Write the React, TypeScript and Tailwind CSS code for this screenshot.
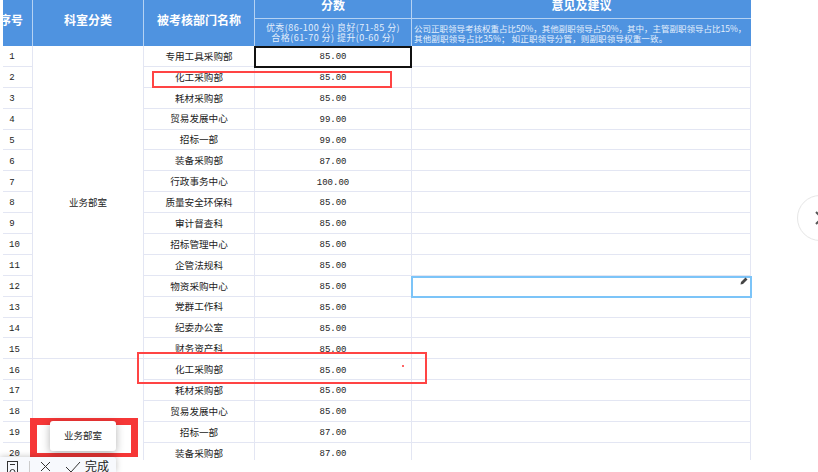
const names = ["专用工具采购部","化工采购部","耗材采购部","贸易发展中心","招标一部","装备采购部","行政事务中心","质量安全环保科","审计督查科","招标管理中心","企管法规科","物资采购中心","党群工作科","纪委办公室","财务资产科","化工采购部","耗材采购部","贸易发展中心","招标一部","装备采购部"];
const scores = ["85.00","85.00","85.00","99.00","99.00","87.00","100.00","85.00","85.00","85.00","85.00","85.00","85.00","85.00","85.00","85.00","85.00","85.00","87.00","87.00"];

export default function App() {
  const head = "flex items-center justify-center bg-[#4f93e0] text-[12px] leading-none font-bold text-white border-[#b5d2f3]";
  const base = "flex items-center justify-center border-r border-b border-[#e3e6f3] bg-white text-[#222] overflow-hidden";
  const mono = "font-['Liberation_Mono',monospace] text-[9px] pt-[4px]";
  return (
    <div className="relative h-[472px] w-[818px] overflow-hidden bg-white font-['Noto_Sans_CJK_SC','Liberation_Sans',sans-serif]">
      <div className="ml-[3px] grid w-[748px] grid-cols-[30px_111px_111px_157px_339px] grid-rows-[19px_27px_repeat(20,20.9px)]">
        <div className={`${head} row-span-2 border-r justify-end overflow-hidden pr-[9px] pb-[7px] whitespace-nowrap`}>序号</div>
        <div className={`${head} row-span-2 border-r pb-[7px]`}>科室分类</div>
        <div className={`${head} row-span-2 border-r pb-[7px]`}>被考核部门名称</div>
        <div className={`${head} border-r border-b pb-[8px]`}>分数</div>
        <div className={`${head} border-b pb-[8px]`}>意见及建议</div>
        <div className="col-start-4 flex flex-col items-center justify-center whitespace-nowrap border-r border-[#b5d2f3] bg-[#4f93e0] text-[9px] leading-[10px] tracking-[0.45px] text-[#e4effc]">
          <span>优秀(86-100 分) 良好(71-85 分)</span>
          <span>合格(61-70 分) 提升(0-60 分)</span>
        </div>
        <div className="flex flex-col justify-center bg-[#4f93e0] pl-[2px] text-[8.5px] leading-[10px] whitespace-nowrap text-[#e4effc]">
          <span>公司正职领导考核权重占比50%，其他副职领导占50%，其中，主管副职领导占比15%，</span>
          <span className="tracking-[0.15px]">其他副职领导占比35%； 如正职领导分管，则副职领导权重一致。</span>
        </div>
        <div className="row-start-3 col-start-2 row-span-15 flex items-center justify-center border-r border-b border-[#e3e6f3] bg-white text-[9.5px] text-[#222]">业务部室</div>
        <div className="row-start-18 col-start-2 row-span-5 border-r border-b border-[#e3e6f3] bg-white"></div>
        {names.map((_, i) => {
          const r = i + 3;
          return (
            <div key={i} className="contents">
              <div style={{ gridRow: r, gridColumn: 1 }} className={`${base} justify-start pl-[6px] ${mono}`}><span className="w-[6px] text-center">{i + 1}</span></div>
              <div style={{ gridRow: r, gridColumn: 3 }} className={`${base} text-[9.6px]`}>{names[i]}</div>
              <div style={{ gridRow: r, gridColumn: 4 }} className={`${base} ${mono}`}>{scores[i]}</div>
              <div style={{ gridRow: r, gridColumn: 5 }} className={base}></div>
            </div>
          );
        })}
      </div>

      <div className="absolute top-[46px] left-[254px] h-[22px] w-[158px] border-2 border-[#111]"></div>
      <div className="absolute top-[276px] left-[411px] h-[22px] w-[341px] border-2 border-[#7cc4f8]"></div>
      <svg className="absolute top-[277px] left-[740px]" width="8" height="8" viewBox="0 0 8 8"><path d="M0.5 7.5 L1 5 L5.5 0.5 L7.5 2.5 L3 7 Z" fill="#444" /></svg>
      <div className="absolute top-[71px] left-[152px] h-[17px] w-[240px] border-2 border-[#f44]"></div>
      <div className="absolute top-[352px] left-[137px] h-[32px] w-[290px] border-2 border-[#f44]"></div>
      <div className="absolute top-[365px] left-[402px] h-[2px] w-[2px] bg-[#f66]"></div>
      <div className="absolute top-[418px] left-[30px] h-[39px] w-[108px] border-t-[7px] border-r-[7px] border-b-[4px] border-l-[7px] border-[#f63737]"></div>
      <div className="absolute top-[421px] left-[50px] flex h-[30px] w-[66px] items-center justify-center rounded-[3px] bg-white pb-px text-[9.5px] text-[#222] shadow-[0_2px_8px_rgba(0,0,0,0.3)]">业务部室</div>
      <div className="absolute top-[460px] left-0 h-[12px] w-[818px] bg-white"></div>
      <div className="absolute top-[457px] left-0 flex h-[15px] w-[116px] items-start rounded-tr-[3px] bg-[#f7f9fd] shadow-[0_0_6px_rgba(0,0,0,0.25)]">
        <svg className="mt-[4px] ml-[7px]" width="11" height="11" viewBox="0 0 11 11" fill="none" stroke="#333"><rect x="0.5" y="0.5" width="10" height="14" /><path d="M3 3.5h5M3 11a2.5 2.5 0 0 1 5 0" /></svg>
        <div className="mt-[4px] ml-[11px] h-[11px] w-px bg-[#ccc]"></div>
        <svg className="mt-[4px] ml-[10px]" width="11" height="11" viewBox="0 0 11 11" fill="none" stroke="#333"><path d="M1 1l9 9M10 1l-9 9" /></svg>
        <svg className="mt-[4px] ml-[14px]" width="16" height="11" viewBox="0 0 16 11" fill="none" stroke="#333"><path d="M1 6l5 5 9-10" /></svg>
        <span className="mt-[2px] ml-[4px] text-[12px] leading-[14px] text-[#222]">完成</span>
      </div>
      <div className="absolute top-[195px] left-[797px] flex h-[46px] w-[46px] items-center rounded-full border border-[#e6e6e6] bg-white pl-[17px]">
        <svg width="8" height="14" viewBox="0 0 8 14" fill="none" stroke="#555" strokeWidth="2"><path d="M1 1l6 6-6 6" /></svg>
      </div>
    </div>
  );
}
